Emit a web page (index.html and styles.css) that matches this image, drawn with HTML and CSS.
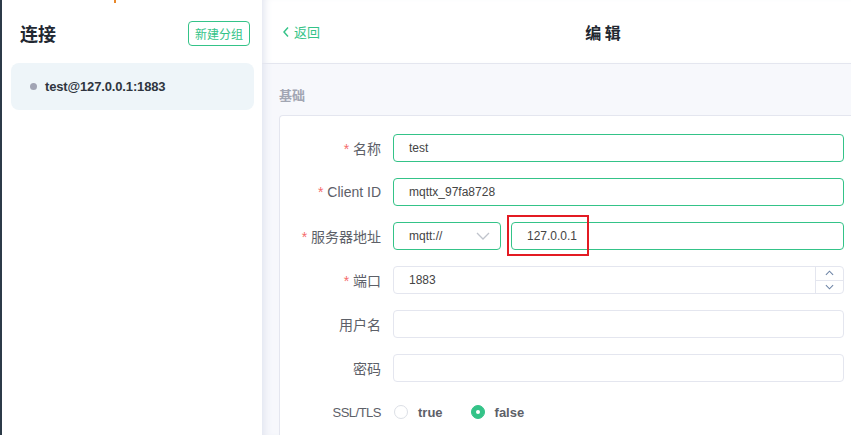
FILE: index.html
```html
<!DOCTYPE html>
<html lang="zh-CN">
<head>
<meta charset="utf-8">
<link rel="stylesheet" href="styles.css">
</head>
<body>
<div class="app">
  <div class="strip"></div>
  <aside class="sidebar">
    <span class="tick"></span>
    <div class="side-head">
      <h1 class="side-title">连接</h1>
      <button class="btn-group">新建分组</button>
    </div>
    <div class="conn-item">
      <span class="conn-dot"></span>
      <span class="conn-name">test@127.0.0.1:1883</span>
    </div>
  </aside>
  <main class="main">
    <header class="topbar">
      <a class="back">
        <svg class="back-icon" viewBox="0 0 10 14" width="8" height="12"><path d="M7.5 1.5 L2.5 7 L7.5 12.5" fill="none" stroke="currentColor" stroke-width="1.8"/></svg>
        返回
      </a>
      <div class="title">编 辑</div>
    </header>
    <section class="content">
      <div class="section-title">基础</div>
      <div class="card">
        <div class="row">
          <label class="label"><span class="req">*</span> 名称</label>
          <div class="field"><div class="input active">test</div></div>
        </div>
        <div class="row">
          <label class="label"><span class="req">*</span> Client ID</label>
          <div class="field"><div class="input active">mqttx_97fa8728</div></div>
        </div>
        <div class="row">
          <label class="label"><span class="req">*</span> 服务器地址</label>
          <div class="field split">
            <div class="input active select">mqtt://
              <svg class="select-arrow" viewBox="0 0 14 8" width="14" height="8"><path d="M1 1 L7 7 L13 1" fill="none" stroke="#c0c4cc" stroke-width="1.3"/></svg>
            </div>
            <div class="host-wrap">
              <div class="input active host">127.0.0.1</div>
              <span class="highlight"></span>
            </div>
          </div>
        </div>
        <div class="row">
          <label class="label"><span class="req">*</span> 端口</label>
          <div class="field"><div class="input number">1883
            <div class="spinner">
              <span class="spin-btn"><svg viewBox="0 0 10 6" width="9" height="6"><path d="M1 5 L5 1 L9 5" fill="none" stroke="#6d84a6" stroke-width="1.2"/></svg></span>
              <span class="spin-btn"><svg viewBox="0 0 10 6" width="9" height="6"><path d="M1 1 L5 5 L9 1" fill="none" stroke="#6d84a6" stroke-width="1.2"/></svg></span>
            </div>
          </div></div>
        </div>
        <div class="row">
          <label class="label">用户名</label>
          <div class="field"><div class="input"></div></div>
        </div>
        <div class="row">
          <label class="label">密码</label>
          <div class="field"><div class="input"></div></div>
        </div>
        <div class="row">
          <label class="label label-latin">SSL/TLS</label>
          <div class="field radios">
            <span class="radio"><span class="radio-circle"></span><span class="radio-text">true</span></span>
            <span class="radio checked"><span class="radio-circle"></span><span class="radio-text">false</span></span>
          </div>
        </div>
      </div>
    </section>
  </main>
</div>
</body>
</html>
```
FILE: styles.css
```css
* { box-sizing: border-box; }
html, body { margin: 0; padding: 0; }
body {
  width: 851px;
  height: 435px;
  overflow: hidden;
  background: #fff;
  font-family: "Liberation Sans", "Noto Sans CJK SC", sans-serif;
  color: #333;
}
.app { display: flex; height: 435px; width: 944px; }
.strip { width: 2px; flex-shrink: 0; background: #2c3a48; }
.sidebar {
  width: 260px;
  flex-shrink: 0;
  background: #fff;
  position: relative;
}
.tick {
  position: absolute;
  left: 112px;
  top: 0;
  width: 2px;
  height: 3px;
  background: #e8882a;
}
.side-head {
  display: flex;
  align-items: center;
  justify-content: space-between;
  padding: 21px 12px 0 18px;
  height: 46px;
}
.side-title {
  margin: 0;
  font-size: 18px;
  font-weight: 700;
  color: #222831;
  font-family: "Noto Sans CJK SC", sans-serif;
  line-height: 25px;
}
.btn-group {
  height: 25px;
  width: 62px;
  padding: 0;
  border: 1px solid #34c388;
  border-radius: 4px;
  background: #fff;
  color: #34c388;
  font-size: 12px;
  font-family: "Noto Sans CJK SC", sans-serif;
  line-height: 23px;
}
.conn-item {
  margin: 17px 8px 0 9px;
  height: 47px;
  background: #eef5f9;
  border-radius: 8px;
  display: flex;
  align-items: center;
  padding-left: 19px;
}
.conn-dot {
  width: 7px;
  height: 7px;
  border-radius: 50%;
  background: #a1a4b4;
  margin-right: 8px;
}
.conn-name {
  font-size: 13px;
  font-weight: 700;
  color: #2f3540;
  letter-spacing: -0.15px;
}
.main {
  width: 682px;
  flex-shrink: 0;
  background: #f7f8fc;
  position: relative;
  box-shadow: inset 8px 0 8px -6px #dfe2ee;
}
.topbar {
  height: 64px;
  background: #fff;
  border-bottom: 1px solid #e4e6ef;
  display: flex;
  align-items: center;
  position: relative;
  box-shadow: inset 8px 0 8px -6px #dfe2ee;
}
.back {
  display: flex;
  align-items: center;
  gap: 4px;
  margin-left: 20px;
  color: #34c388;
  font-size: 13px;
  font-family: "Noto Sans CJK SC", sans-serif;
}
.title {
  position: absolute;
  left: 0;
  right: 0;
  text-align: center;
  font-size: 16px;
  font-weight: 700;
  color: #222831;
  font-family: "Noto Sans CJK SC", sans-serif;
  pointer-events: none;
}
.content { padding: 22px 0 0 17px; }
.section-title {
  font-size: 13px;
  font-weight: 700;
  color: #a2a6b3;
  font-family: "Noto Sans CJK SC", sans-serif;
  line-height: 18px;
  margin-bottom: 11px;
}
.card {
  background: #fff;
  border: 1px solid #e4e6ef;
  border-right: none;
  border-radius: 4px 0 0 0;
  padding-top: 18px;
  height: 340px;
}
.row {
  display: flex;
  align-items: center;
  height: 28px;
  margin-bottom: 16px;
}
.label {
  width: 113px;
  padding-right: 12px;
  text-align: right;
  font-size: 14px;
  color: #5d6068;
  font-family: "Liberation Sans", "Noto Sans CJK SC", sans-serif;
}
.label-latin { font-size: 13px; letter-spacing: -0.5px; }
.req { color: #f56c6c; }
.field { width: 451px; display: flex; }
.input {
  flex: 1;
  height: 28px;
  border: 1px solid #e4e6ef;
  border-radius: 4px;
  padding-left: 15px;
  font-size: 12px;
  line-height: 26px;
  color: #444;
  background: #fff;
  position: relative;
}
.input.active { border-color: #34c388; }
.split { gap: 10px; }
.select {
  flex: 0 0 108px;
  display: flex;
  align-items: center;
  justify-content: space-between;
  padding-right: 10px;
}
.host-wrap { flex: 1; position: relative; display: flex; }
.host { padding-left: 15px; }
.highlight {
  position: absolute;
  left: -4px;
  top: -7px;
  width: 82px;
  height: 41px;
  border: 2px solid #e31b23;
}
.spinner {
  position: absolute;
  right: 0;
  top: 0;
  bottom: 0;
  width: 28px;
  border-left: 1px solid #e4e6ef;
  display: flex;
  flex-direction: column;
}
.spin-btn {
  flex: 1;
  display: flex;
  align-items: center;
  justify-content: center;
}
.spin-btn + .spin-btn { border-top: 1px solid #e4e6ef; }
.radios { align-items: center; padding-left: 1px; }
.radio {
  display: flex;
  align-items: center;
  margin-right: 28px;
}
.radio-circle {
  width: 14px;
  height: 14px;
  border-radius: 50%;
  border: 1px solid #dcdfe6;
  background: #fff;
  margin-right: 10px;
  position: relative;
}
.radio.checked .radio-circle { background: #34c388; border-color: #34c388; }
.radio.checked .radio-circle::after {
  content: "";
  position: absolute;
  left: 4px;
  top: 4px;
  width: 4px;
  height: 4px;
  border-radius: 50%;
  background: #fff;
}
.radio-text {
  font-size: 13px;
  font-weight: 700;
  color: #5d6068;
}
```
